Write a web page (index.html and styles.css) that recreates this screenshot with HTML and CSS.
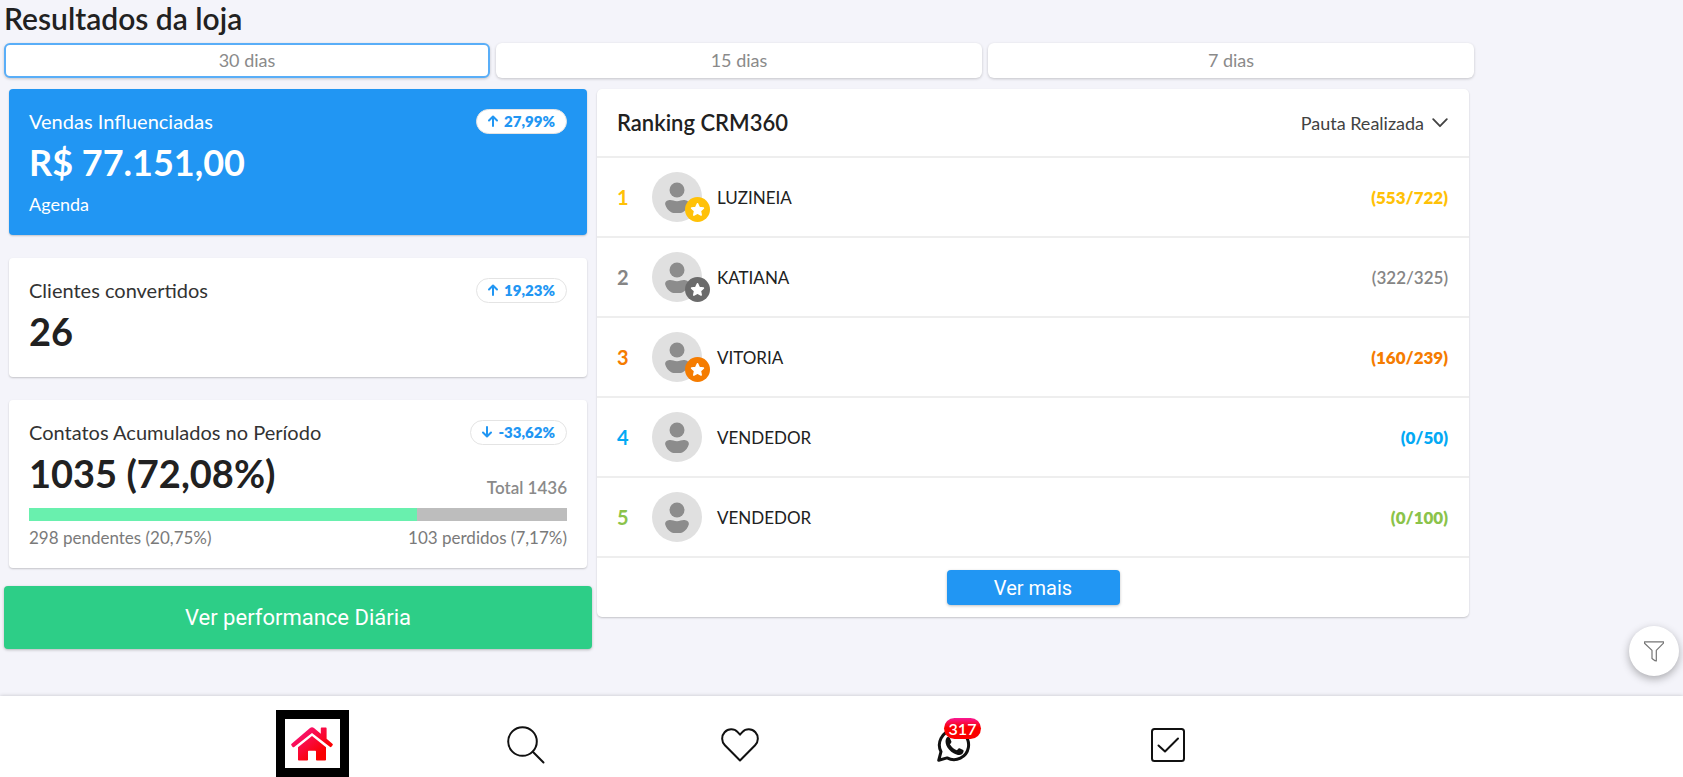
FILE: index.html
```html
<!DOCTYPE html>
<html lang="pt-BR">
<head>
<meta charset="utf-8">
<meta name="viewport" content="width=device-width, initial-scale=1">
<title>Resultados da loja</title>
<link rel="stylesheet" href="styles.css">
</head>
<body>
<svg class="sprite" aria-hidden="true">
  <symbol id="person" viewBox="0 0 50 50">
    <circle cx="25" cy="18" r="7.5"/>
    <path d="M16.500 28.300c2.800-1 5.200.9 8.500.9s5.700-1.900 8.500-.9c2.300.5 3.800 2.200 3.300 4.200-.9 3.200-3 6-6 7.800-.8.4-1.500.6-2.300.6h-7c-.8 0-1.500-.2-2.300-.6-3-1.800-5.100-4.600-6-7.800-.5-2 1-3.700 3.300-4.200z"/>
  </symbol>
  <symbol id="star" viewBox="0 0 24 24">
    <path stroke-linejoin="round" stroke-width="1.600" stroke="currentColor" fill="currentColor" d="M12 6.600l1.700 3.600 3.900.5-2.900 2.700.8 3.900-3.500-1.900-3.500 1.900.8-3.900-2.900-2.700 3.900-.5z"/>
  </symbol>
  <symbol id="arrow-up" viewBox="0 0 12 14">
    <path fill="none" stroke="currentColor" stroke-width="2" stroke-linecap="round" stroke-linejoin="round" d="M6 12V3M2 6.500L6 2.500l4 4"/>
  </symbol>
  <symbol id="arrow-down" viewBox="0 0 12 14">
    <path fill="none" stroke="currentColor" stroke-width="2" stroke-linecap="round" stroke-linejoin="round" d="M6 2V11M2 7.500L6 11.500l4-4"/>
  </symbol>
</svg>

<main class="page">
  <h1 class="title">Resultados da loja</h1>
  <div class="tabs">
    <button class="tab tab-active" type="button">30 dias</button>
    <button class="tab" type="button">15 dias</button>
    <button class="tab" type="button">7 dias</button>
  </div>

  <div class="columns">
    <div class="summary">
      <section class="card card-sales">
        <div class="card-head">
          <h2 class="label">Vendas Influenciadas</h2>
          <span class="pill"><svg class="arrow"><use href="#arrow-up"/></svg>27,99%</span>
        </div>
        <p class="value value-money">R$ 77.151,00</p>
        <p class="note">Agenda</p>
      </section>

      <section class="card card-clients">
        <div class="card-head">
          <h2 class="label">Clientes convertidos</h2>
          <span class="pill"><svg class="arrow"><use href="#arrow-up"/></svg>19,23%</span>
        </div>
        <p class="value">26</p>
      </section>

      <section class="card card-contacts">
        <div class="card-head">
          <h2 class="label">Contatos Acumulados no Período</h2>
          <span class="pill"><svg class="arrow"><use href="#arrow-down"/></svg>-33,62%</span>
        </div>
        <div class="value-row">
          <p class="value">1035 (72,08%)</p>
          <p class="total">Total 1436</p>
        </div>
        <div class="bar"><div class="bar-fill" style="width:72.08%"></div></div>
        <div class="legend"><span>298 pendentes (20,75%)</span><span>103 perdidos (7,17%)</span></div>
      </section>

      <button class="daily" type="button">Ver performance Diária</button>
    </div>

    <section class="ranking">
      <header class="ranking-head">
        <h2 class="ranking-title">Ranking CRM360</h2>
        <button class="sort" type="button">Pauta Realizada
          <svg class="chevron" viewBox="0 0 16 10"><path fill="none" stroke="currentColor" stroke-width="1.800" stroke-linecap="round" stroke-linejoin="round" d="M1.200 1.200L8 8.200l6.800-7"/></svg>
        </button>
      </header>
      <ol class="list">
        <li class="row first"><span class="pos">1</span><span class="avatar"><svg class="person"><use href="#person"/></svg><svg class="medal"><use href="#star"/></svg></span><span class="name">LUZINEIA</span><span class="score">(553/722)</span></li>
        <li class="row second"><span class="pos">2</span><span class="avatar"><svg class="person"><use href="#person"/></svg><svg class="medal"><use href="#star"/></svg></span><span class="name">KATIANA</span><span class="score">(322/325)</span></li>
        <li class="row third"><span class="pos">3</span><span class="avatar"><svg class="person"><use href="#person"/></svg><svg class="medal"><use href="#star"/></svg></span><span class="name">VITORIA</span><span class="score">(160/239)</span></li>
        <li class="row fourth"><span class="pos">4</span><span class="avatar"><svg class="person"><use href="#person"/></svg></span><span class="name">VENDEDOR</span><span class="score">(0/50)</span></li>
        <li class="row fifth"><span class="pos">5</span><span class="avatar"><svg class="person"><use href="#person"/></svg></span><span class="name">VENDEDOR</span><span class="score">(0/100)</span></li>
      </ol>
      <footer class="ranking-foot"><button class="more" type="button">Ver mais</button></footer>
    </section>
  </div>
</main>

<button class="filter" type="button" aria-label="Filtrar">
  <svg class="funnel" viewBox="0 0 20 21"><path fill="none" stroke="currentColor" stroke-width="1.200" stroke-linejoin="round" d="M.5.800h19v1.400L12.300 9.400v10.600l-1.300-.3-3-2.300V9.400L.5 2.200z"/></svg>
</button>

<nav class="nav">
  <div class="nav-inner">
    <a class="nav-item" href="#inicio" aria-label="Início"><span class="home-frame">
      <svg class="home" viewBox="0 0 42 34"><defs><linearGradient id="pink" x1="0" y1="0" x2="1" y2="1"><stop offset="0" stop-color="#f81894"/><stop offset=".75" stop-color="#fa0000"/></linearGradient></defs>
      <path fill="url(#pink)" d="M.6 16.800L19 1.100c1.200-1 2.800-1 4 0l6.800 5.700V1.500c0-.6.4-1 1-1h3.800c.6 0 1 .4 1 1v10.300l5.800 5c.6.5.6 1 .2 1.500l-1.200 1.500c-.5.5-1 .5-1.600 0L21 5.900 3.200 19.900c-.6.500-1.100.5-1.600 0L.4 18.300c-.4-.5-.4-1 .2-1.500zM7 20.200L21 9l14 11.200v12.200c0 .7-.5 1.100-1.200 1.100h-7.600c-.7 0-1.200-.4-1.200-1.100v-7.600c0-.6-.4-1-1-1h-6c-.6 0-1 .4-1 1v7.600c0 .7-.5 1.100-1.200 1.100H8.200c-.7 0-1.200-.4-1.200-1.100z"/></svg></span></a>
    <a class="nav-item" href="#busca" aria-label="Buscar"><svg class="icon icon-search" viewBox="0 0 38 38"><circle cx="15.500" cy="15.500" r="14.300"/><path d="M25.800 25.800l10.700 10.700"/></svg></a>
    <a class="nav-item" href="#favoritos" aria-label="Favoritos"><svg class="icon icon-heart" viewBox="0 0 38 34"><path d="M19 32.500L3.900 17.200C.3 13.500.3 7.800 3.600 4.200 7.200.4 13.100.3 16.700 4.100L19 6.700l2.300-2.600c3.600-3.800 9.500-3.700 13.100.1 3.300 3.600 3.300 9.300-.3 13z"/></svg></a>
    <a class="nav-item" href="#mensagens" aria-label="WhatsApp, 317 mensagens"><span class="chat">
      <svg class="icon icon-chat" viewBox="0 0 34 34"><path class="bubble" d="M1.700 32.300l2.300-8.600a14.600 14.600 0 1 1 6.100 6.200z"/><path class="solid" d="M9.200 10.500c.8-1.700 2.900-2 3.700-.4l1.500 3.400c.3 1-.9 2-1.500 2.800 1.800 3.100 4 4.800 7 6 .8-.8 1.600-2.400 2.600-2l3.700 1.800c1 .6.200 3-1 3.900-2 1.500-5 1.200-8.600-.8-3.300-1.800-5.900-4.800-7.200-7.800-1-2.400-1.200-4.900-.2-6.900z"/></svg>
      <span class="count">317</span></span></a>
    <a class="nav-item" href="#tarefas" aria-label="Tarefas"><svg class="icon icon-check" viewBox="0 0 34 34"><rect x="1" y="1" width="32" height="32" rx="2.500"/><path d="M7.500 17.500l6.500 6 13-13"/></svg></a>
  </div>
</nav>
</body>
</html>
```
FILE: styles.css
```css
* { box-sizing: border-box; }

body {
  margin: 0;
  min-height: 100vh;
  display: flex;
  flex-direction: column;
  background: #f4f4fa;
  color: #212121;
  font-family: Lato, "Open Sans", sans-serif;
  font-size: 17px;
}

h1, h2, p, ol { margin: 0; padding: 0; font-weight: 400; }
button { font: inherit; color: inherit; border: 0; padding: 0; cursor: pointer; }
.sprite { position: absolute; width: 0; height: 0; }

.page { flex: 1; padding: 0 209px 40px 4px; }

.title { font-size: 30px; line-height: 36px; font-weight: 600; }

.tabs { display: grid; grid-template-columns: repeat(3, 1fr); gap: 6px; padding-top: 7px; }
.tab {
  height: 35px;
  padding-bottom: 1px;
  border-radius: 6px;
  background: #fff;
  color: #8a8a8a;
  font-size: 18px;
  box-shadow: 0 1px 3px rgba(0, 0, 0, .2);
}
.tab-active { border: 2px solid #59aef8; }

.columns { display: grid; grid-template-columns: 2fr 3fr; align-items: start; padding-top: 11px; }

.summary { display: flex; flex-direction: column; }
.card {
  margin: 0 5px 23px;
  padding: 20px;
  border-radius: 4px;
  background: #fff;
  box-shadow: 0 1px 2px rgba(0, 0, 0, .2);
}
.card-sales { height: 146px; background: #2196f3; color: #fff; }
.card-clients { height: 119px; }
.card-contacts { height: 168px; margin-bottom: 18px; }
.card-head { display: flex; justify-content: space-between; align-items: center; height: 25px; }
.label { font-size: 20px; line-height: 24px; padding-bottom: 2px; color: #333; }
.card-sales .label { color: #fff; }
.pill {
  display: flex;
  align-items: center;
  gap: 5px;
  height: 25px;
  padding: 0 11px 1px 10px;
  border: 1px solid #e4e4e4;
  border-radius: 13px;
  background: #fff;
  color: #2196f3;
  font-size: 15px;
  font-weight: 800;
}
.arrow { width: 12px; height: 14px; }
.value { font-size: 38px; line-height: 48px; font-weight: 700; margin-top: 4px; }
.value-money { font-size: 36px; }
.note { font-size: 18px; line-height: 24px; margin-top: 6px; }
.value-row { display: flex; justify-content: space-between; align-items: flex-end; }
.total { color: #8a8a8a; line-height: 18px; font-weight: 600; }
.bar { height: 13px; margin-top: 11px; background: #bdbdbd; }
.bar-fill { height: 100%; background: #69f0ae; }
.legend { display: flex; justify-content: space-between; margin-top: 5px; line-height: 24px; color: #7a7a7a; }

.daily, .more { font-family: Roboto, sans-serif; color: #fff; box-shadow: 0 1px 3px rgba(0, 0, 0, .25); }
.daily { height: 63px; border-radius: 4px; background: #2dce87; font-size: 22px; }

.ranking { margin: 0 5px; border-radius: 5px; background: #fff; box-shadow: 0 1px 2px rgba(0, 0, 0, .2); }
.ranking-head {
  display: flex;
  justify-content: space-between;
  align-items: center;
  height: 69px;
  padding: 0 21px 0 20px;
  border-bottom: 2px solid #eee;
}
.ranking-title { font-size: 22px; font-weight: 600; }
.sort { display: flex; align-items: center; gap: 8px; background: none; color: #424242; font-size: 18px; }
.chevron { width: 16px; height: 10px; }
.list { list-style: none; }
.row { display: flex; align-items: center; height: 80px; padding: 0 21px 0 20px; border-bottom: 2px solid #eee; }
.pos { width: 35px; font-size: 20px; font-weight: 700; }
.avatar { position: relative; width: 50px; height: 50px; border-radius: 50%; background: #e0e0e0; }
.person { display: block; width: 50px; height: 50px; fill: #8c8c8c; }
.medal { position: absolute; right: -8px; bottom: 0; width: 25px; height: 25px; border-radius: 50%; color: #fff; }
.name { flex: 1; padding-left: 15px; }
.score { font-weight: 800; }
.first .pos, .first .score { color: #ffc107; }
.first .medal { background: #ffc107; }
.second .pos, .second .score { color: #858585; }
.second .score { font-weight: 600; }
.second .medal { background: #6b6b6b; }
.third .pos, .third .score { color: #f57c00; }
.third .medal { background: #f57c00; }
.fourth .pos, .fourth .score { color: #03a9f4; }
.fifth .pos, .fifth .score { color: #8bc34a; }
.ranking-foot { display: flex; justify-content: center; align-items: center; height: 59px; }
.more { width: 173px; height: 35px; border-radius: 4px; background: #2196f3; font-size: 20px; }

.filter {
  position: fixed;
  right: 4px;
  bottom: 101px;
  display: flex;
  align-items: center;
  justify-content: center;
  width: 50px;
  height: 50px;
  border-radius: 50%;
  background: #fff;
  color: #757575;
  box-shadow: 0 3px 8px rgba(0, 0, 0, .3);
}
.funnel { width: 20px; height: 21px; }

.nav { padding-right: 203px; background: #fff; box-shadow: 0 0 4px rgba(0, 0, 0, .2); }
.nav-inner { display: grid; grid-template-columns: repeat(5, 214px); justify-content: center; height: 81px; }
.nav-item { display: flex; align-items: center; justify-content: center; padding-top: 16px; color: #111; text-decoration: none; }
.nav-item:first-child { padding-top: 14px; }
.home-frame { display: flex; align-items: center; justify-content: center; width: 73px; height: 67px; border: 9px solid #000; }
.home { width: 42px; height: 34px; }
.icon { display: block; fill: none; stroke: currentColor; stroke-width: 2; stroke-linecap: round; stroke-linejoin: round; }
.icon-search { width: 38px; height: 38px; }
.icon-heart { width: 38px; height: 34px; }
.icon-chat, .icon-check { width: 34px; height: 34px; }
.bubble { stroke-width: 3; }
.solid { fill: currentColor; stroke: none; }
.chat { position: relative; }
.count {
  position: absolute;
  left: 7px;
  top: -10px;
  min-width: 37px;
  height: 21px;
  border-radius: 11px;
  background: linear-gradient(#f81894, #fa0000 45%);
  color: #fff;
  font-size: 16px;
  font-weight: 600;
  line-height: 21px;
  text-align: center;
}
```
